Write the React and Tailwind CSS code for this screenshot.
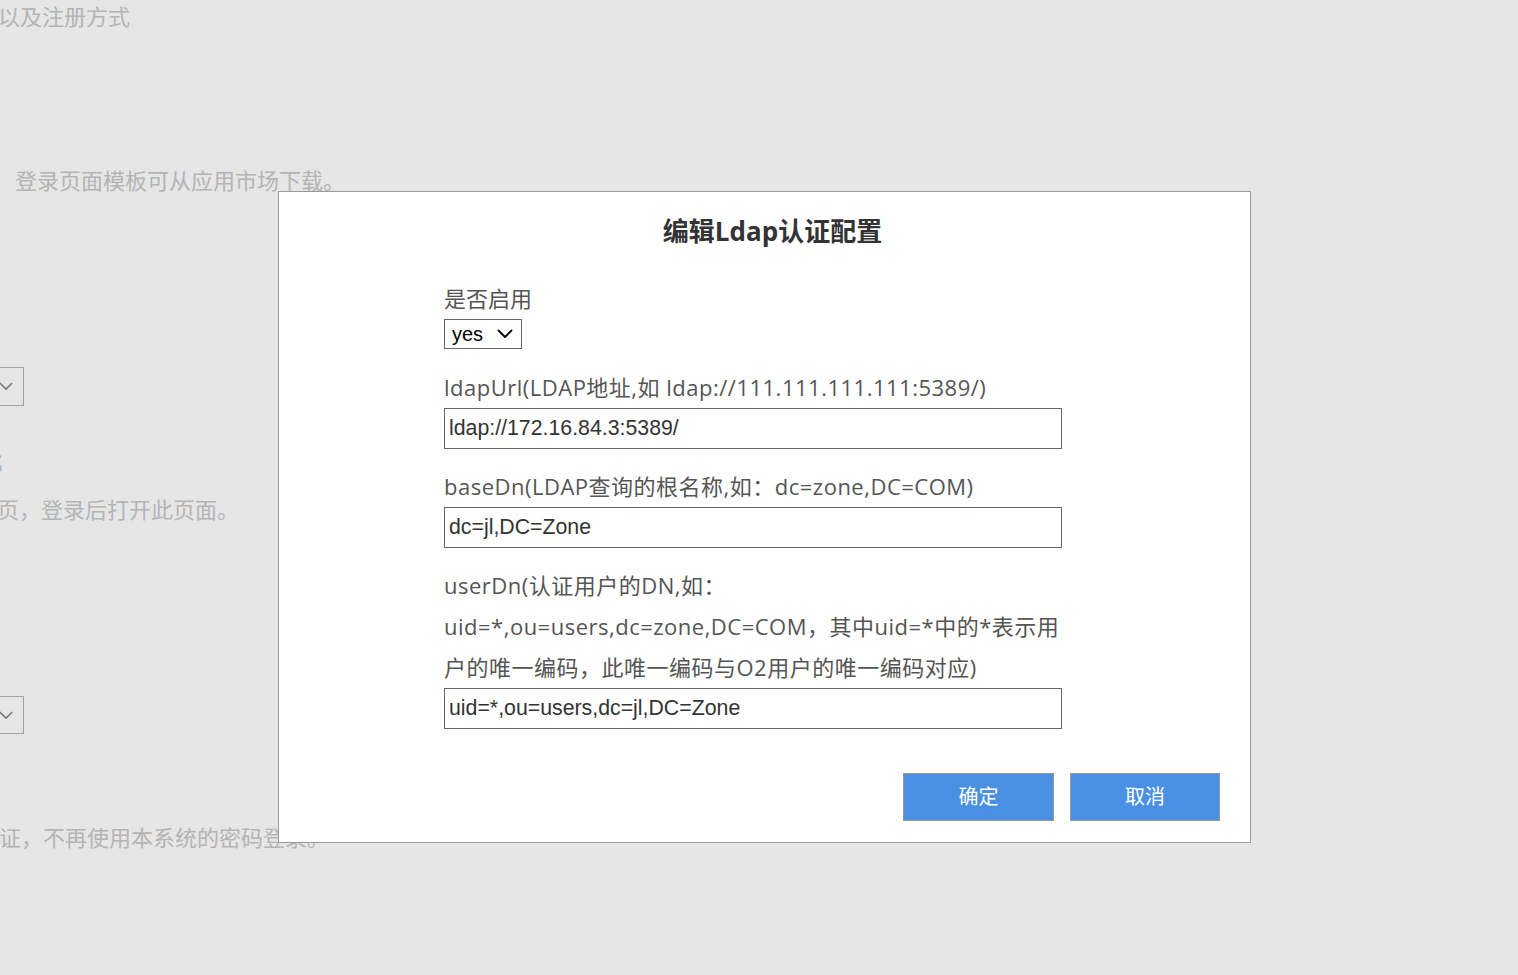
import React from 'react';

const font = { fontFamily: '"Open Sans", "Noto Sans CJK SC", sans-serif' };
const inputFont = { fontFamily: '"Liberation Sans", "Noto Sans CJK SC", sans-serif' };

function Chevron({ className }) {
  return (
    <svg className={className} viewBox="0 0 16 10" fill="none" stroke="currentColor" strokeWidth="1.8" strokeLinecap="round" strokeLinejoin="round">
      <path d="M1.5 1.5 L8 8 L14.5 1.5" />
    </svg>
  );
}

function Field({ label, value }) {
  return (
    <div className="flex flex-col">
      <div className="text-[22px] leading-[41px] tracking-[0.5px] text-[#555]">{label}</div>
      <div className="w-[618px] h-[41px] border border-[#666] flex items-center pl-[4px] text-[21.3px] text-[#333]" style={inputFont}>
        {value}
      </div>
    </div>
  );
}

export default function App() {
  return (
    <div className="relative min-h-screen w-full overflow-hidden bg-[#e6e6e6]" style={font}>
      {/* page behind the dialog */}
      <div className="flex flex-col text-[22px] text-[#b4b4b4] whitespace-nowrap">
        <div className="h-[32px] leading-[32px] -ml-[2px]">以及注册方式</div>
        <div className="mt-[132px] h-[32px] leading-[32px] ml-[15px]">登录页面模板可从应用市场下载。</div>
        <div className="mt-[171px] -ml-[60px] w-[84px] h-[39px] border border-[#a0a0a0] flex items-center justify-end pr-[10px] text-[#777]">
          <Chevron className="w-[14px] h-[9px]" />
        </div>
        <div className="mt-[38px] h-[32px] leading-[32px] -ml-[6px]">；</div>
        <div className="mt-[17px] h-[32px] leading-[32px] -ml-[3px]">页，登录后打开此页面。</div>
        <div className="mt-[171px] -ml-[60px] w-[84px] h-[38px] border border-[#a0a0a0] flex items-center justify-end pr-[10px] text-[#777]">
          <Chevron className="w-[14px] h-[9px]" />
        </div>
        <div className="mt-[87px] h-[32px] leading-[32px] -ml-[1px]">证，不再使用本系统的密码登录。</div>
      </div>

      {/* dialog */}
      <div className="absolute left-[278px] top-[191px] w-[973px] h-[652px] bg-white border border-[#9a9a9a] flex flex-col">
        <div className="mt-[20px] pl-[16px] h-[38px] leading-[38px] text-center text-[26px] font-bold text-[#333]">编辑Ldap认证配置</div>
        <div className="ml-[165px] mt-[28px] flex flex-col">
          <div className="text-[22px] leading-[41px] text-[#555]">是否启用</div>
          <div className="w-[78px] h-[30px] border border-[#666] flex items-center justify-between pl-[7px] pr-[8px] text-[20px] text-black" style={inputFont}>
            <span>yes</span>
            <Chevron className="w-[16px] h-[10px]" />
          </div>
          <div className="mt-[18px] flex flex-col gap-[17px] w-[630px]">
            <Field label="ldapUrl(LDAP地址,如 ldap://111.111.111.111:5389/)" value="ldap://172.16.84.3:5389/" />
            <Field label="baseDn(LDAP查询的根名称,如：dc=zone,DC=COM)" value="dc=jl,DC=Zone" />
            <Field
              label="userDn(认证用户的DN,如：uid=*,ou=users,dc=zone,DC=COM，其中uid=*中的*表示用户的唯一编码，此唯一编码与O2用户的唯一编码对应)"
              value="uid=*,ou=users,dc=jl,DC=Zone"
            />
          </div>
        </div>
        <div className="mt-auto mb-[21px] mr-[30px] flex justify-end gap-[16px]">
          <button className="w-[151px] h-[48px] bg-[#4a90e2] border border-[#999] text-white text-[20px]">确定</button>
          <button className="w-[150px] h-[48px] bg-[#4a90e2] border border-[#999] text-white text-[20px]">取消</button>
        </div>
      </div>
    </div>
  );
}
